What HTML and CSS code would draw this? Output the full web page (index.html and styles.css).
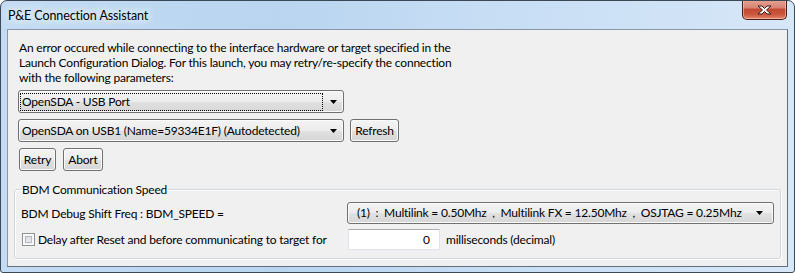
FILE: index.html
```html
<!DOCTYPE html>
<html lang="en">
<head>
  <meta charset="UTF-8">
  <title>P&amp;E Connection Assistant</title>
  <link rel="stylesheet" href="styles.css">
</head>
<body>
  <div class="window">
    <div class="titlebar">
      <span class="title">P&amp;E Connection Assistant</span>
      <div class="close">
        <svg width="17" height="10" viewBox="0 0 17 10">
          <path d="M2 1h4l2.5 2.5L11 1h4l-4.5 4 4.5 4h-4L8.5 6.5 6 9H2l4.5-4z" fill="#fff" stroke="#3a1a14" stroke-width="1" stroke-linejoin="round"/>
        </svg>
      </div>
    </div>

    <div class="client">
      <div class="connection">
        <p class="message">An error occured while connecting to the interface hardware or target specified in the<br>Launch Configuration Dialog. For this launch, you may retry/re-specify the connection<br>with the following parameters:</p>

        <div class="row">
          <div class="combo combo-port">
            <span class="combo-text focused">OpenSDA - USB Port</span>
            <svg class="arrow" width="7" height="4" viewBox="0 0 7 4"><path d="M0 0h7L3.5 4z" fill="#000"/></svg>
          </div>
        </div>

        <div class="row">
          <div class="combo combo-port">
            <span class="combo-text">OpenSDA on USB1 (Name=59334E1F) (Autodetected)</span>
            <svg class="arrow" width="7" height="4" viewBox="0 0 7 4"><path d="M0 0h7L3.5 4z" fill="#000"/></svg>
          </div>
          <button class="btn btn-refresh">Refresh</button>
        </div>

        <div class="row row-actions">
          <button class="btn btn-retry">Retry</button>
          <button class="btn btn-abort">Abort</button>
        </div>
      </div>

      <fieldset class="group">
        <legend>BDM Communication Speed</legend>
        <div class="group-grid">
          <span class="field-label">BDM Debug Shift Freq : BDM_SPEED =</span>
          <div class="combo combo-speed">
            <span class="combo-text">(1)  :  Multilink = 0.50Mhz  ,  Multilink FX = 12.50Mhz  ,  OSJTAG = 0.25Mhz</span>
            <svg class="arrow" width="7" height="4" viewBox="0 0 7 4"><path d="M0 0h7L3.5 4z" fill="#000"/></svg>
          </div>

          <label class="check">
            <span class="check-box"></span>
            Delay after Reset and before communicating to target for
          </label>
          <div class="delay">
            <input class="delay-input" type="text" value="0">
            <span class="delay-unit">milliseconds (decimal)</span>
          </div>
        </div>
      </fieldset>
    </div>
  </div>
</body>
</html>
```

FILE: styles.css
```css
html, body {
  margin: 0;
  padding: 0;
  background: #fff;
}
body {
  font-family: Lato, 'Noto Sans', sans-serif;
  font-size: 12px;
  letter-spacing: -0.2px;
  color: #000;
}
.window {
  box-sizing: border-box;
  width: 795px;
  height: 273px;
  display: flex;
  flex-direction: column;
  border: 1px solid #3b4856;
  border-radius: 7px 7px 3px 3px;
  background: linear-gradient(to right, #c3dbf3 0%, #b9d5f0 35%, #c6ddf4 60%, #d6e7f8 100%);
  overflow: hidden;
}
.titlebar {
  height: 28px;
  display: flex;
  align-items: flex-start;
  justify-content: space-between;
  padding: 0 7px;
  flex-shrink: 0;
}
.title {
  margin-top: 7px;
  line-height: 15px;
  font-size: 12.5px;
  letter-spacing: -0.1px;
  color: #000;
  text-shadow: 0 0 6px #eaf4fd, 0 0 10px #eaf4fd, 0 0 14px #eaf4fd;
}
.close {
  box-sizing: border-box;
  width: 45px;
  height: 20px;
  margin-top: -1px;
  display: flex;
  align-items: center;
  justify-content: center;
  border: 1px solid #4b1d16;
  border-top: none;
  border-radius: 0 0 5px 5px;
  background: linear-gradient(#e4a393 0%, #d88574 40%, #c24a32 50%, #c9563d 75%, #e3866b 100%);
  box-shadow: inset 0 0 0 1px rgba(255, 220, 210, 0.5);
}
.client {
  flex: 1;
  margin: 0 6px 5px;
  display: flex;
  flex-direction: column;
  border: 1px solid #5f6f80;
  border-color: #8797a8 #5f6f80 #5f6f80 #8797a8;
  background: #f0f0f0;
  padding: 10px 6px 5px;
}
.connection {
  padding-left: 4px;
}
.message {
  margin: 0 0 5px 1px;
  line-height: 15px;
  white-space: nowrap;
}
.row {
  display: flex;
  align-items: center;
  margin-bottom: 6px;
}
.row-actions {
  margin-top: 1px;
  margin-bottom: 11px;
  margin-left: 1px;
  gap: 7px;
}
.combo {
  box-sizing: border-box;
  display: flex;
  align-items: center;
  border: 1px solid #707070;
  border-radius: 3px;
  background: linear-gradient(#f4f4f4 0%, #ececec 50%, #e1e1e1 51%, #d6d6d6 100%);
  box-shadow: inset 0 0 0 1px #fbfbfb;
  white-space: pre;
}
.combo-port {
  width: 326px;
  height: 23px;
  padding: 0 5px 0 2px;
}
.combo-text {
  flex: 1;
  line-height: 16px;
  padding-left: 1px;
}
.combo-text.focused {
  outline: 1px dotted #000;
  margin-right: 8px;
}
.arrow {
  flex-shrink: 0;
  margin-right: 1px;
}
.btn {
  box-sizing: border-box;
  height: 23px;
  padding: 0;
  font-family: inherit;
  font-size: 12px;
  letter-spacing: -0.2px;
  color: #000;
  border: 1px solid #707070;
  border-radius: 3px;
  background: linear-gradient(#f4f4f4 0%, #ececec 50%, #e1e1e1 51%, #d6d6d6 100%);
  box-shadow: inset 0 0 0 1px #fbfbfb;
}
.btn-refresh {
  width: 49px;
  margin-left: 6px;
}
.btn-retry {
  width: 37px;
}
.btn-abort {
  width: 40px;
}
.group {
  margin: 0;
  padding: 5px 6px 8px;
  border: 1px solid #d0d8de;
  border-radius: 3px;
  box-shadow: inset 1px 1px 0 #fff, 1px 1px 0 #fff;
}
.group legend {
  padding: 0 1px;
  line-height: 15px;
}
.group-grid {
  display: grid;
  grid-template-columns: 326px auto;
  row-gap: 5px;
  align-items: center;
}
.combo-speed {
  width: 427px;
  height: 22px;
  padding: 0 9px 0 8px;
}
.check {
  display: flex;
  align-items: center;
  gap: 3px;
  padding-left: 1px;
  white-space: nowrap;
}
.check-box {
  box-sizing: border-box;
  width: 13px;
  height: 13px;
  border: 1px solid #8e8f8f;
  background: linear-gradient(135deg, #cbcfd5, #f7f7f7);
  box-shadow: inset 0 0 0 1px #fff, inset 0 0 0 2px #f4f4f4, inset 0 0 0 3px #b7bbc0;
}
.delay {
  display: flex;
  align-items: center;
  gap: 6px;
}
.delay-input {
  box-sizing: border-box;
  width: 92px;
  height: 21px;
  margin: 0 0 0 1px;
  padding: 0 9px 0 4px;
  font-family: inherit;
  font-size: 12px;
  text-align: right;
  border: 1px solid #e2e3ea;
  border-top-color: #abadb3;
  background: #fff;
  outline: none;
}
```
